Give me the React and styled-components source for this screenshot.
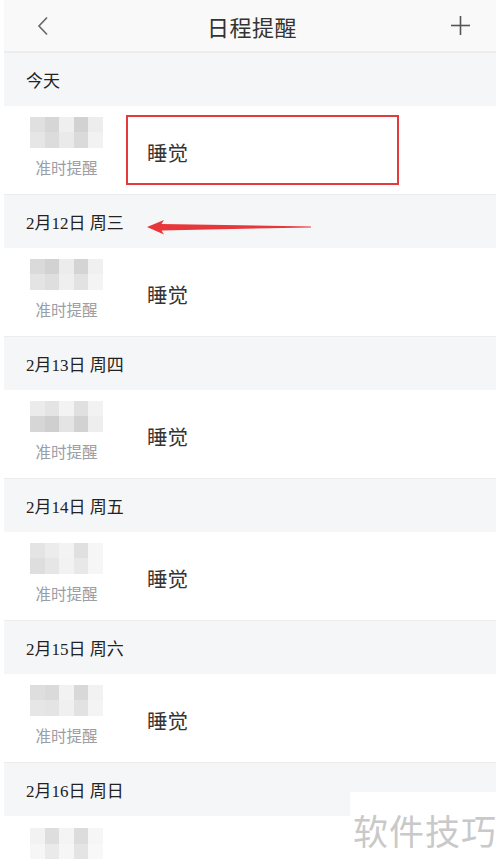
import React from "react";
import styled, { createGlobalStyle } from "styled-components";

const GlobalStyle = createGlobalStyle`
  html, body {
    margin: 0;
    padding: 0;
    background: #ffffff;
  }
  body {
    font-family: "Noto Sans CJK SC", "Noto Sans", sans-serif;
    color: #333;
  }
`;

const Page = styled.div`
  position: relative;
  margin: 0 4px;
  height: 866px;
  overflow: hidden;
  background: #f5f6f8;
`;

const Header = styled.div`
  height: 51px;
  display: flex;
  align-items: center;
  justify-content: space-between;
  padding: 0 24px 0 28px;
  background: #f9f9f9;
  border-bottom: 1px solid #eeeeee;
`;

const Title = styled.div`
  font-size: 22px;
  color: #333;
  letter-spacing: 0.5px;
`;

const IconBtn = styled.div`
  width: 22px;
  height: 22px;
  display: flex;
  align-items: center;
  justify-content: center;
`;

const SectionHead = styled.div`
  position: relative;
  height: 53px;
  display: flex;
  align-items: center;
  padding-left: 22px;
  background: #f5f6f8;
  border-top: 1px solid #ececec;
  font-family: "Liberation Serif", "Noto Sans CJK SC", serif;
  font-size: 17px;
  color: #222;
  &:first-of-type {
    border-top: none;
  }
`;

const Row = styled.div`
  position: relative;
  height: 88px;
  display: flex;
  align-items: ${({ $partial }) => ($partial ? "flex-start" : "center")};
  padding-left: 26px;
  padding-top: ${({ $partial }) => ($partial ? "12px" : "0")};
  box-sizing: border-box;
  background: #ffffff;
`;

const Left = styled.div`
  width: 73px;
  display: flex;
  flex-direction: column;
  align-items: center;
  gap: 9px;
  margin-bottom: 6px;
`;

const Mosaic = styled.div`
  display: grid;
  grid-template-columns: repeat(5, 1fr);
  width: 73px;
  height: 31px;
  filter: blur(0.7px);
`;

const Cell = styled.div`
  background: ${({ $shade }) => $shade};
`;

const Hint = styled.div`
  font-size: 15.5px;
  color: #9a9ea6;
  line-height: 21px;
  white-space: nowrap;
`;

const Name = styled.div`
  margin-left: 44px;
  font-size: 20.5px;
  color: #333;
  margin-top: 4px;
`;

const Highlight = styled.div`
  position: absolute;
  left: 122px;
  top: 9px;
  width: 269px;
  height: 66px;
  border: 2px solid #e33b3b;
`;

const Arrow = styled.svg`
  position: absolute;
  left: 143px;
  top: 24px;
`;

const Watermark = styled.div`
  position: fixed;
  right: 0;
  bottom: 0;
  width: 150px;
  height: 74px;
  background: #ffffff;
  display: flex;
  align-items: center;
  justify-content: center;
  font-size: 35px;
  color: #c9c9c9;
  letter-spacing: 1px;
`;

const patterns = [
  ["#e0e0e0", "#d6d6d6", "#efefef", "#d2d2d2", "#ededed", "#e6e6e6", "#dcdcdc", "#eaeaea", "#dadada", "#f2f2f2"],
  ["#dadada", "#d2d2d2", "#ececec", "#d4d4d4", "#f0f0f0", "#e4e4e4", "#dedede", "#efefef", "#e2e2e2", "#f4f4f4"],
  ["#ebebeb", "#e4e4e4", "#f3f3f3", "#e0e0e0", "#f2f2f2", "#d6d6d6", "#cfcfcf", "#e4e4e4", "#d2d2d2", "#eeeeee"],
  ["#e4e4e4", "#ececec", "#f3f3f3", "#e0e0e0", "#f6f6f6", "#dedede", "#e6e6e6", "#f2f2f2", "#e8e8e8", "#f6f6f6"],
  ["#dedede", "#dadada", "#f2f2f2", "#d8d8d8", "#f2f2f2", "#e6e6e6", "#e4e4e4", "#f0f0f0", "#e2e2e2", "#f4f4f4"],
  ["#f2f2f2", "#dedede", "#f4f4f4", "#dcdcdc", "#f6f6f6", "#f6f6f6", "#eaeaea", "#f6f6f6", "#e4e4e4", "#f8f8f8"],
];

const sections = [
  { label: "今天", highlight: true },
  { label: "2月12日 周三", arrow: true },
  { label: "2月13日 周四" },
  { label: "2月14日 周五" },
  { label: "2月15日 周六" },
  { label: "2月16日 周日", partial: true },
];

const App = () => {
  return (
    <>
      <GlobalStyle />
      <Page>
        <Header>
          <IconBtn>
            <svg width="12" height="20" viewBox="0 0 12 20">
              <polyline points="10,1.5 2,10 10,18.5" fill="none" stroke="#666" strokeWidth="1.6" />
            </svg>
          </IconBtn>
          <Title>日程提醒</Title>
          <IconBtn>
            <svg width="21" height="21" viewBox="0 0 21 21">
              <line x1="10.5" y1="1" x2="10.5" y2="20" stroke="#555" strokeWidth="1.6" />
              <line x1="1" y1="10.5" x2="20" y2="10.5" stroke="#555" strokeWidth="1.6" />
            </svg>
          </IconBtn>
        </Header>
        {sections.map((s, i) => (
          <React.Fragment key={s.label}>
            <SectionHead>
              {s.label}
              {s.arrow && (
                <Arrow width="166" height="16" viewBox="0 0 166 16">
                  <polygon
                    points="0,8 17,1 14.5,5 164,7.4 164,8.4 14.5,11.5 17,15.5"
                    fill="#e8373a"
                  />
                </Arrow>
              )}
            </SectionHead>
            <Row $partial={s.partial}>
              <Left>
                <Mosaic>
                  {patterns[i].map((c, j) => (
                    <Cell key={j} $shade={c} />
                  ))}
                </Mosaic>
                {!s.partial && <Hint>准时提醒</Hint>}
              </Left>
              {!s.partial && <Name>睡觉</Name>}
              {s.highlight && <Highlight />}
            </Row>
          </React.Fragment>
        ))}
      </Page>
      <Watermark>软件技巧</Watermark>
    </>
  );
};

export default App;
